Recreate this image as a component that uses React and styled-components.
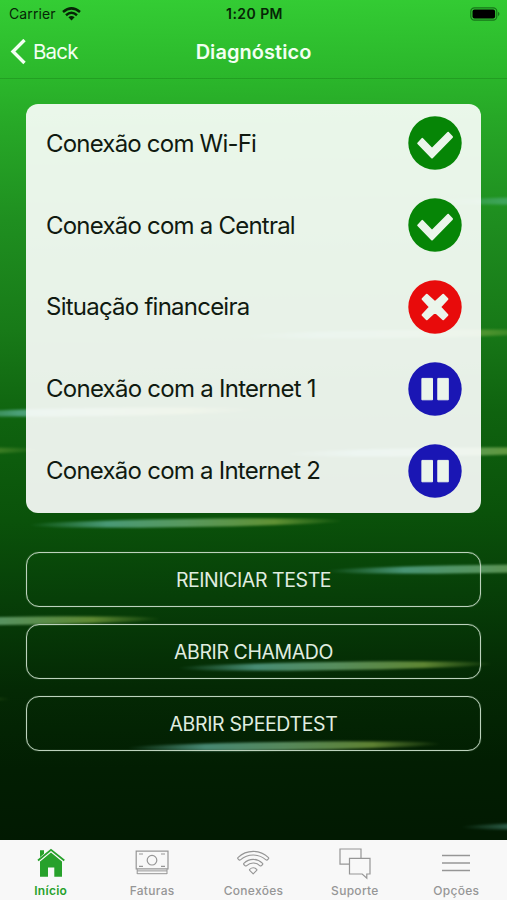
import styled, { createGlobalStyle } from 'styled-components';

const GlobalStyle = createGlobalStyle`
    * {
        box-sizing: border-box;
    }

    body {
        margin: 0;
        font-family: Inter, "Liberation Sans", sans-serif;
    }
`

const Screen = styled.div`
    position: relative;
    isolation: isolate;
    height: 900px;
    overflow: hidden;
    display: flex;
    flex-direction: column;
    background: linear-gradient(179deg, #34cd34 0px, #2bb72b 80px, #27a827 125px, #1f8f20 220px, #187a18 330px, #0f630f 420px, #0a520a 520px, #073f08 600px, #042904 690px, #021e02 770px, #021a02 840px);
`

const Streak = styled.div`
    position: absolute;
    z-index: -1;
    left: ${ props => props.$x }px;
    top: ${ props => props.$y }px;
    width: 316px;
    height: 8px;
    border-radius: 50%;
    opacity: ${ props => props.$opacity || 0.65 };
    background: linear-gradient(90deg, transparent, #6cc0b0 25%, #83c08c 50%, #8fb54c 78%, transparent);
    filter: blur(1.2px);
    transform: rotate(-0.8deg);
`

const StatusBar = styled.header`
    height: 27px;
    padding: 0 7px 0 9px;
    display: grid;
    grid-template-columns: 1fr auto 1fr;
    align-items: center;
    font-size: 14px;
    color: #062506;
`

const Carrier = styled.div`
    display: flex;
    align-items: center;
    gap: 6px;
    letter-spacing: 0.1px;
`

const Clock = styled.div`
    font-weight: 600;
    font-size: 14px;
    letter-spacing: 0.45px;
`

const Battery = styled.svg`
    justify-self: end;
`

const NavBar = styled.nav`
    height: 52px;
    padding: 0 10px 2px;
    display: grid;
    grid-template-columns: 1fr auto 1fr;
    align-items: center;
    color: #f2fff2;
    border-bottom: 1px solid rgba(0, 70, 0, 0.2);
`

const BackButton = styled.a`
    display: flex;
    align-items: center;
    gap: 7px;
    font-size: 20.5px;
    letter-spacing: -0.8px;
    cursor: pointer;
`

const Title = styled.h1`
    margin: 0;
    font-size: 20px;
    font-weight: 600;
    letter-spacing: 0.05px;
`

const Content = styled.main`
    flex: 1;
    padding: 24.5px 26px 0;
    display: flex;
    flex-direction: column;
`

const Card = styled.ul`
    margin: 0 0 39px;
    padding: 0;
    list-style: none;
    border-radius: 12px;
    background: rgba(255, 255, 255, 0.9);
`

const Row = styled.li`
    height: 81.9px;
    padding: 0 19.5px 2.6px 20px;
    display: flex;
    align-items: center;
    justify-content: space-between;
    font-size: 24px;
    letter-spacing: ${ props => props.$spacing }px;
    color: #101a10;
`

const Actions = styled.div`
    display: flex;
    flex-direction: column;
    gap: 17px;
`

const ActionButton = styled.button`
    height: 55px;
    padding: 2px 0 0;
    border: 1px solid #bcd2bc;
    border-radius: 13px;
    background: none;
    box-shadow: 0 0 1px rgba(200, 225, 200, 0.6), inset 0 0 1px rgba(200, 225, 200, 0.6);
    font-family: inherit;
    font-size: 19.5px;
    letter-spacing: ${ props => props.$spacing }px;
    color: #e0ede0;
    cursor: pointer;
`

const TabBar = styled.footer`
    height: 60px;
    display: grid;
    grid-template-columns: repeat(5, 1fr);
    background: #f8f8f8;
`

const Tab = styled.a`
    padding-top: 8px;
    display: flex;
    flex-direction: column;
    align-items: center;
    gap: 5px;
    font-size: 12px;
    font-weight: ${ props => props.$active ? 600 : 500 };
    line-height: 16px;
    letter-spacing: 0.3px;
    color: ${ props => props.$active ? '#27a12b' : '#969696' };
`

const statusColours = {
    ok: '#068506',
    error: '#e80b0b',
    paused: '#1a16b4',
}

const StatusIcon = ({ status }) => (
    <svg width="54" height="54" viewBox="-27 -27 54 54">
        <circle r="26.7" fill={ statusColours[status] } />
        <g fill="#ebf5eb" stroke="#ebf5eb" strokeWidth="2" strokeLinejoin="round">
            { status === 'ok' && <path d="M-16.8 .4L-12.7-4.1L-3 5.9L13.2-10.2L17-6L-3 14.5Z" /> }
            { status === 'error' && <path d="M-8.2-12.2L0-4.8L8.2-12.2L12.4-8L5 0L12.4 8L8.2 12.2L0 4.8L-8.2 12.2L-12.4 8L-5 0L-12.4-8Z" /> }
            { status === 'paused' && <path strokeWidth="1" d="M-13.1-10.6H-2.5V10.8H-13.1ZM2.8-10.6H13.3V10.8H2.8Z" /> }
        </g>
    </svg>
)

const HomeIcon = () => (
    <svg width="30" height="30" viewBox="0 0 30 30" fill="currentColor">
        <path d="M4 2.2H8V6.5L4 10Z" />
        <path d="M15 4.5L26 13.5V28.7H18.3V19.5H12V28.7H4V13.5Z" />
        <path d="M2 13L15 1.7L28.3 13" fill="none" stroke="#f8f8f8" strokeWidth="3" />
        <path d="M2 12.5L15 1.8L28.3 12.5" fill="none" stroke="currentColor" strokeWidth="1.8" />
    </svg>
)

const MoneyIcon = () => (
    <svg width="34" height="30" viewBox="0 0 34 30" fill="none" stroke="currentColor">
        <path d="M1.2 3.2H33V20.8H1.2Z" strokeWidth="1.2" />
        <circle cx="17" cy="12.2" r="4.8" strokeWidth="1.2" />
        <path d="M4 6H8M26 6H30M4 18.3H8M26 18.3H30" strokeWidth="1.2" />
        <path d="M2.2 22.9H32M2.2 25.7H32M2.2 21V26M32 21V26" />
    </svg>
)

const WifiOutlineIcon = () => (
    <svg width="34" height="30" viewBox="0 0 34 30" fill="none" stroke="currentColor" strokeWidth="1.1" strokeLinejoin="round">
        <path d="M1.9 9.6Q8.4 3.4 17.2 3.4T32.5 9.6Q33 10.2 32.4 10.8L31.2 12Q30.6 12.4 30 11.9Q24.4 7 17.2 7T4.4 11.9Q3.8 12.4 3.2 12L2 10.8Q1.4 10.2 1.9 9.6Z" />
        <path d="M7.8 15.4Q11.9 11.4 17.2 11.4T26.6 15.4Q27 16 26.6 16.5L25.2 17.8Q24.6 18.2 24 17.8Q21 15 17.2 15T10.4 17.8Q9.8 18.2 9.2 17.8L7.8 16.5Q7.4 16 7.8 15.4Z" />
        <path d="M13.7 21.3Q17.2 18.3 20.7 21.3Q21.2 21.8 20.7 22.3L17.2 25.8L13.7 22.3Q13.2 21.8 13.7 21.3Z" />
    </svg>
)

const ChatIcon = () => (
    <svg width="34" height="32" viewBox="0 0 34 32" fill="none" stroke="currentColor" strokeWidth="1.2">
        <path d="M11 16.2H2V1H23V10.2" />
        <path d="M11.5 10.4H32V26H28.8V30.2L24.2 26H11.5Z" />
    </svg>
)

const MenuIcon = () => (
    <svg width="30" height="30" viewBox="0 0 30 30" fill="none" stroke="currentColor" strokeWidth="1.3">
        <path d="M1 7.5H29M1 15H29M1 22.5H29" />
    </svg>
)

const streaks = [
    { x: 424, y: 196, opacity: 0.4 },
    { x: 240, y: 330, opacity: 0.45 },
    { x: -60, y: 408 },
    { x: -272, y: 448, opacity: 0.55 },
    { x: 280, y: 448 },
    { x: 28, y: 519 },
    { x: 325, y: 565 },
    { x: -154, y: 617 },
    { x: 177, y: 662 },
    { x: -304, y: 697, opacity: 0.6 },
    { x: 126, y: 742 },
    { x: 460, y: 821 },
]

const checks = [
    { label: 'Conexão com Wi-Fi', status: 'ok', spacing: -0.8 },
    { label: 'Conexão com a Central', status: 'ok', spacing: -0.78 },
    { label: 'Situação financeira', status: 'error', spacing: -0.76 },
    { label: 'Conexão com a Internet 1', status: 'paused', spacing: -0.74 },
    { label: 'Conexão com a Internet 2', status: 'paused', spacing: -0.76 },
]

const actions = [
    { label: 'REINICIAR TESTE', spacing: -0.42 },
    { label: 'ABRIR CHAMADO', spacing: -0.42 },
    { label: 'ABRIR SPEEDTEST', spacing: -0.36 },
]

const tabs = [
    { label: 'Início', Icon: HomeIcon, active: true },
    { label: 'Faturas', Icon: MoneyIcon },
    { label: 'Conexões', Icon: WifiOutlineIcon },
    { label: 'Suporte', Icon: ChatIcon },
    { label: 'Opções', Icon: MenuIcon },
]

const IconBox = styled.span`
    height: 30px;
    display: flex;
    justify-content: center;
`

const App = () => {
    return(
        <Screen>
            <GlobalStyle />
            { streaks.map((streak, i) => (
                <Streak key={ i } $x={ streak.x } $y={ streak.y } $opacity={ streak.opacity } />
            )) }
            <StatusBar>
                <Carrier>
                    Carrier
                    <svg width="19" height="14" viewBox="0 0 19 14" fill="none" stroke="currentColor" strokeWidth="2.5">
                        <path d="M1 5Q9.5-2.2 18 5M4 8.2Q9.5 3.4 15 8.2" />
                        <path d="M6.4 10.3Q9.5 7.8 12.6 10.3L9.5 13.5Z" fill="currentColor" stroke="none" />
                    </svg>
                </Carrier>
                <Clock>1:20 PM</Clock>
                <Battery width="30" height="14" viewBox="0 0 30 14">
                    <rect x="0.8" y="0.8" width="26" height="12.4" rx="3.6" fill="none" stroke="#17751a" strokeWidth="1.2" />
                    <rect x="2.5" y="2.5" width="22.6" height="9" rx="2" fill="#000" />
                    <path d="M28 4.8Q31 7 28 9.2Z" fill="#17751a" />
                </Battery>
            </StatusBar>
            <NavBar>
                <BackButton>
                    <svg width="16" height="26" viewBox="0 0 16 26" fill="none" stroke="currentColor" strokeWidth="3.4">
                        <path d="M14.5 1L3 12.5L14.5 24" />
                    </svg>
                    Back
                </BackButton>
                <Title>Diagnóstico</Title>
            </NavBar>
            <Content>
                <Card>
                    { checks.map(check => (
                        <Row key={ check.label } $spacing={ check.spacing }>
                            { check.label }
                            <StatusIcon status={ check.status } />
                        </Row>
                    )) }
                </Card>
                <Actions>
                    { actions.map(action => (
                        <ActionButton key={ action.label } $spacing={ action.spacing }>{ action.label }</ActionButton>
                    )) }
                </Actions>
            </Content>
            <TabBar>
                { tabs.map(({ label, Icon, active }) => (
                    <Tab key={ label } $active={ active }>
                        <IconBox><Icon /></IconBox>
                        { label }
                    </Tab>
                )) }
            </TabBar>
        </Screen>
    )
}

export default App
